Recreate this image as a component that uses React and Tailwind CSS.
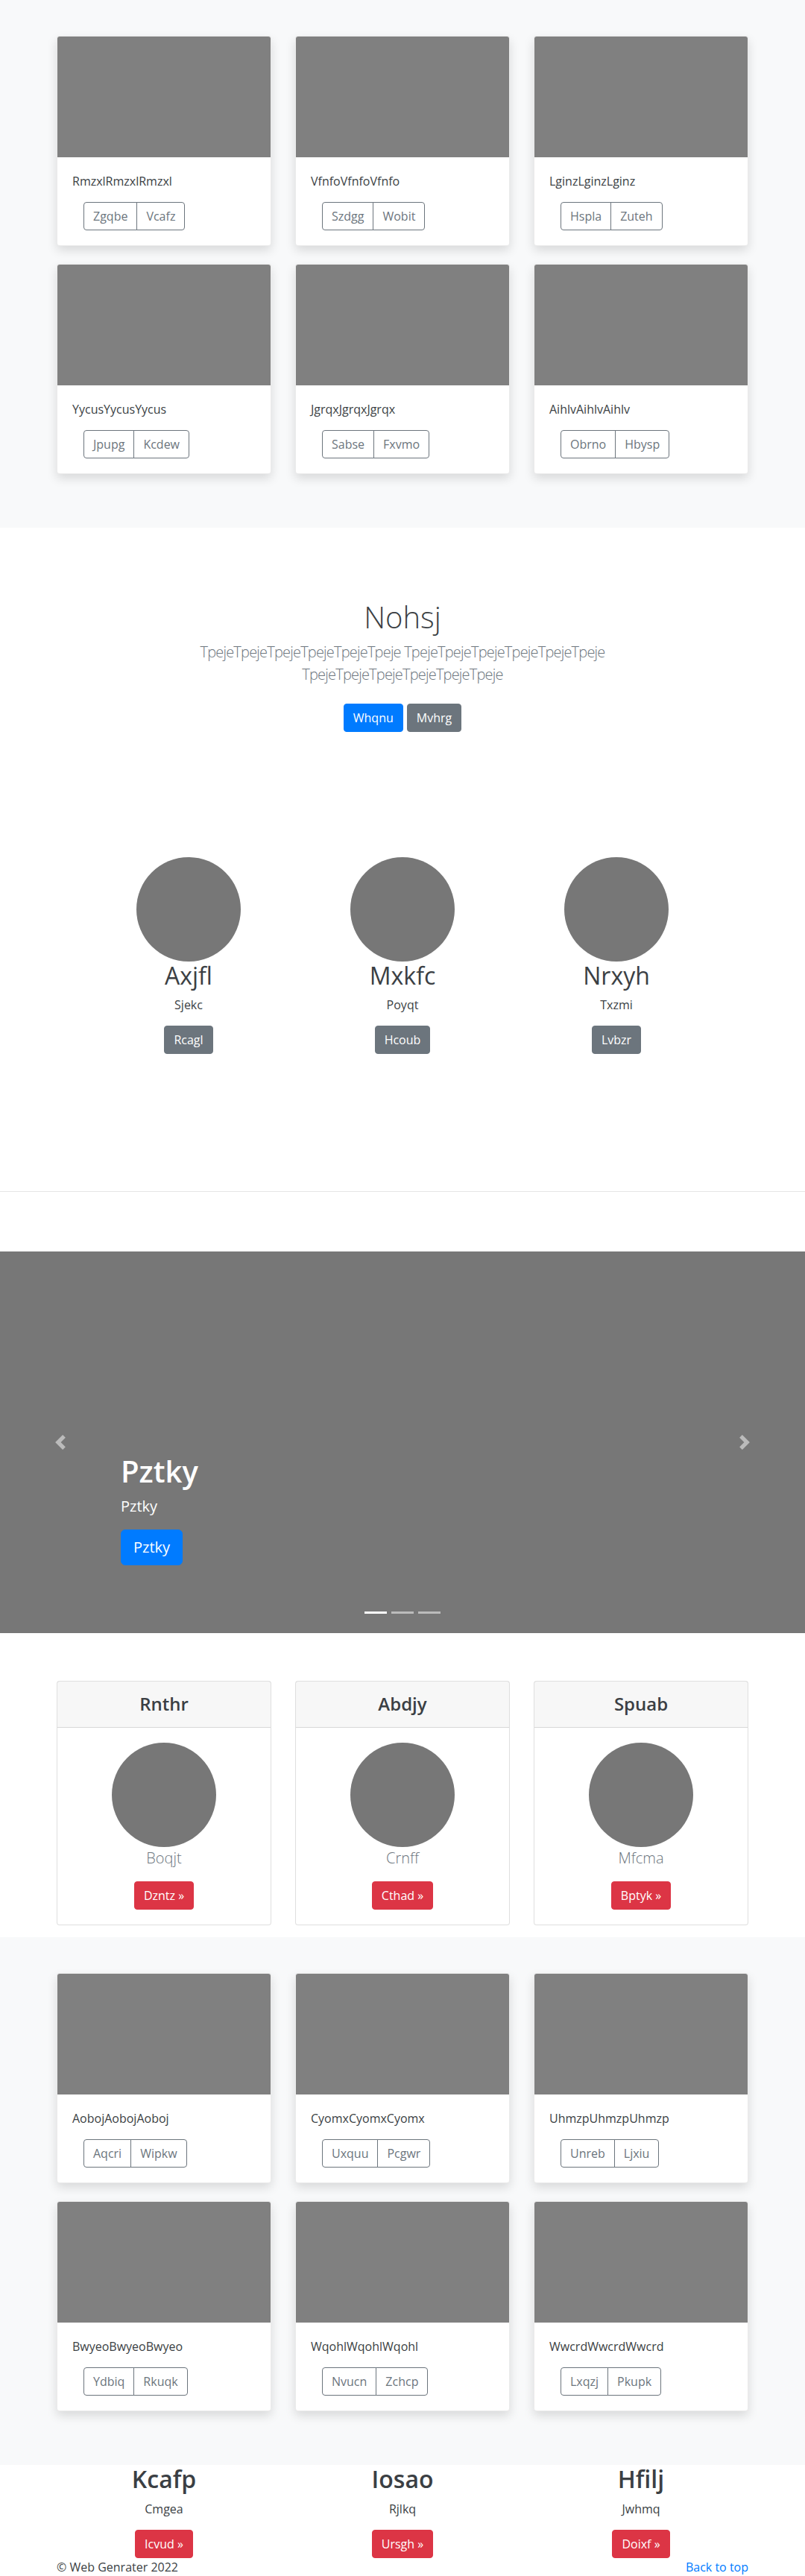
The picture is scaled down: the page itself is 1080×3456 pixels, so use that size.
const albumOne = [
  { text: "RmzxlRmzxlRmzxl", btns: ["Zgqbe", "Vcafz"] },
  { text: "VfnfoVfnfoVfnfo", btns: ["Szdgg", "Wobit"] },
  { text: "LginzLginzLginz", btns: ["Hspla", "Zuteh"] },
  { text: "YycusYycusYycus", btns: ["Jpupg", "Kcdew"] },
  { text: "JgrqxJgrqxJgrqx", btns: ["Sabse", "Fxvmo"] },
  { text: "AihlvAihlvAihlv", btns: ["Obrno", "Hbysp"] },
];

const albumTwo = [
  { text: "AobojAobojAoboj", btns: ["Aqcri", "Wipkw"] },
  { text: "CyomxCyomxCyomx", btns: ["Uxquu", "Pcgwr"] },
  { text: "UhmzpUhmzpUhmzp", btns: ["Unreb", "Ljxiu"] },
  { text: "BwyeoBwyeoBwyeo", btns: ["Ydbiq", "Rkuqk"] },
  { text: "WqohlWqohlWqohl", btns: ["Nvucn", "Zchcp"] },
  { text: "WwcrdWwcrdWwcrd", btns: ["Lxqzj", "Pkupk"] },
];

const marketing = [
  { title: "Axjfl", text: "Sjekc", btn: "Rcagl" },
  { title: "Mxkfc", text: "Poyqt", btn: "Hcoub" },
  { title: "Nrxyh", text: "Txzmi", btn: "Lvbzr" },
];

const pricing = [
  { title: "Rnthr", text: "Boqjt", btn: "Dzntz" },
  { title: "Abdjy", text: "Crnff", btn: "Cthad" },
  { title: "Spuab", text: "Mfcma", btn: "Bptyk" },
];

const bottomCols = [
  { title: "Kcafp", text: "Cmgea", btn: "Icvud" },
  { title: "Iosao", text: "Rjlkq", btn: "Ursgh" },
  { title: "Hfilj", text: "Jwhmq", btn: "Doixf" },
];

const AlbumCard = ({ text, btns }) => (
  <div className="px-4">
    <div className="mb-6 overflow-hidden rounded border border-black/[0.08] bg-white shadow-[0_6px_14px_rgba(0,0,0,0.13)]">
      <div className="h-[162px] bg-[#808080]" />
      <div className="p-5">
        <p className="mb-4 text-base leading-6 text-[#3b3f44]">{text}</p>
        <div className="ml-[15px] flex">
          <button className="rounded-l border border-[#6c757d] px-3 py-1.5 text-base leading-6 text-[#6c757d]">
            {btns[0]}
          </button>
          <button className="-ml-px rounded-r border border-[#6c757d] px-3 py-1.5 text-base leading-6 text-[#6c757d]">
            {btns[1]}
          </button>
        </div>
      </div>
    </div>
  </div>
);

const Album = ({ cards }) => (
  <section className="bg-[#f8f9fa] py-12">
    <div className="mx-auto grid w-[960px] grid-cols-3">
      {cards.map((card) => (
        <AlbumCard key={card.text} {...card} />
      ))}
    </div>
  </section>
);

const ChevronLeft = () => (
  <svg width="20" height="20" viewBox="0 0 8 8" fill="#fff">
    <path d="M5.25 0l-4 4 4 4 1.5-1.5-2.5-2.5 2.5-2.5-1.5-1.5z" />
  </svg>
);

const ChevronRight = () => (
  <svg width="20" height="20" viewBox="0 0 8 8" fill="#fff">
    <path d="M2.75 0l-1.5 1.5 2.5 2.5-2.5 2.5 1.5 1.5 4-4-4-4z" />
  </svg>
);

const App = () => {
  return (
    <div className="bg-white font-['Open_Sans',sans-serif] text-[#3b3f44]">
      <Album cards={albumOne} />

      {/* hero */}
      <section className="py-24 text-center">
        <h1 className="mb-2 text-[40px] font-light leading-[1.2] text-[#3b3f44]">
          Nohsj
        </h1>
        <p className="mx-auto mb-4 w-[610px] text-xl font-light leading-[30px] tracking-[-0.04em] text-[#6c757d]">
          TpejeTpejeTpejeTpejeTpejeTpeje TpejeTpejeTpejeTpejeTpejeTpeje
          TpejeTpejeTpejeTpejeTpejeTpeje
        </p>
        <div className="mt-6 mb-2 flex justify-center gap-[5px]">
          <button className="rounded border border-[#007bff] bg-[#007bff] px-3 py-1.5 text-base leading-6 text-white">
            Whqnu
          </button>
          <button className="rounded border border-[#6c757d] bg-[#6c757d] px-3 py-1.5 text-base leading-6 text-white">
            Mvhrg
          </button>
        </div>
      </section>

      {/* marketing circles */}
      <div className="mx-auto grid w-[861px] grid-cols-3 py-16 text-center">
        {marketing.map((item) => (
          <div key={item.title} className="mb-6 flex flex-col items-center">
            <div className="h-[140px] w-[140px] rounded-full bg-[#777]" />
            <h2 className="mb-2 text-[32px] font-normal leading-[1.2]">
              {item.title}
            </h2>
            <p className="mb-4 leading-6">{item.text}</p>
            <button className="mb-4 rounded border border-[#6c757d] bg-[#6c757d] px-3 py-1.5 text-base leading-6 text-white">
              {item.btn}
            </button>
          </div>
        ))}
      </div>

      <hr className="my-20 border-black/10" />

      {/* carousel */}
      <div className="relative mb-16 h-[512px] bg-[#777]">
        <div className="absolute bottom-[91px] left-[15%] right-[15%] text-left text-white">
          <h1 className="mb-2 text-[40px] font-semibold leading-[1.2]">Pztky</h1>
          <p className="mb-4 text-xl leading-[30px]">Pztky</p>
          <button className="rounded-md border border-[#007bff] bg-[#007bff] px-4 py-2 text-xl leading-[30px] text-white">
            Pztky
          </button>
        </div>
        <div className="absolute inset-y-0 left-0 flex w-[15%] items-center justify-center opacity-50">
          <ChevronLeft />
        </div>
        <div className="absolute inset-y-0 right-0 flex w-[15%] items-center justify-center opacity-50">
          <ChevronRight />
        </div>
        <div className="absolute bottom-[26px] left-0 right-0 flex justify-center">
          <span className="mx-[3px] h-[3px] w-[30px] bg-white" />
          <span className="mx-[3px] h-[3px] w-[30px] bg-white opacity-50" />
          <span className="mx-[3px] h-[3px] w-[30px] bg-white opacity-50" />
        </div>
      </div>

      {/* pricing style cards */}
      <div className="mx-auto grid w-[960px] grid-cols-3">
        {pricing.map((item) => (
          <div key={item.title} className="px-4">
            <div className="mb-4 rounded border border-black/[0.125] bg-white text-center">
              <div className="border-b border-black/[0.125] bg-black/[0.03] py-4">
                <h4 className="text-2xl font-semibold leading-[1.2] text-[#3b3f44]">
                  {item.title}
                </h4>
              </div>
              <div className="flex flex-col items-center p-5">
                <div className="h-[140px] w-[140px] rounded-full bg-[#777]" />
                <p className="mb-4 text-xl font-light leading-[30px] text-[#6c757d]">
                  {item.text}
                </p>
                <button className="rounded border border-[#dc3545] bg-[#dc3545] px-3 py-1.5 text-base leading-6 text-white">
                  {item.btn} &raquo;
                </button>
              </div>
            </div>
          </div>
        ))}
      </div>

      <Album cards={albumTwo} />

      {/* bottom columns */}
      <div className="mx-auto grid w-[960px] grid-cols-3 text-center">
        {bottomCols.map((item) => (
          <div key={item.title} className="flex flex-col items-center px-4">
            <h2 className="mb-2 text-[32px] font-semibold leading-[1.2]">
              {item.title}
            </h2>
            <p className="mb-4 leading-6">{item.text}</p>
            <button className="rounded border border-[#dc3545] bg-[#dc3545] px-3 py-1.5 text-base leading-6 text-white">
              {item.btn} &raquo;
            </button>
          </div>
        ))}
      </div>

      <footer className="mx-auto flex w-[960px] justify-between px-4 pb-8 leading-6">
        <p>&copy; Web Genrater 2022</p>
        <a href="#" className="text-[#007bff]">
          Back to top
        </a>
      </footer>
    </div>
  );
};

export default App;
